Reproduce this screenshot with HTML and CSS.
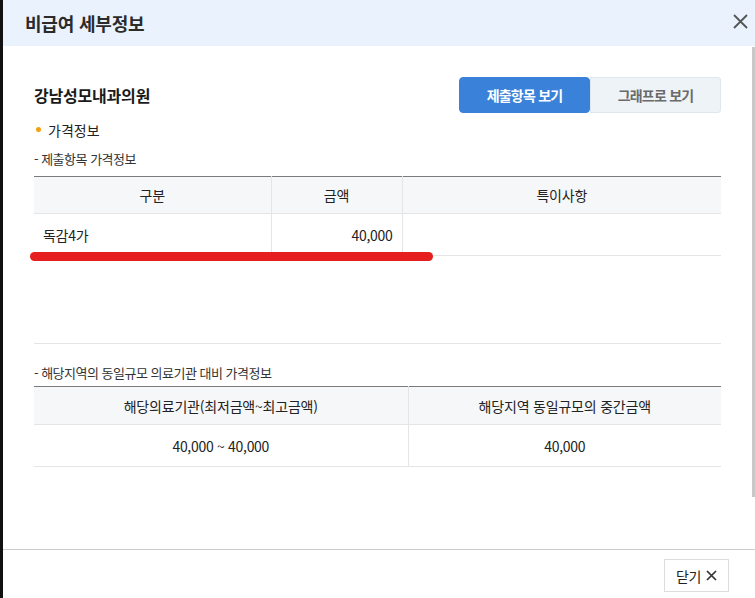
FILE: index.html
```html
<!DOCTYPE html>
<html lang="ko">
<head>
<meta charset="utf-8">
<title>비급여 세부정보</title>
<link rel="stylesheet" href="styles.css">
</head>
<body>
<div class="modal">
  <header class="modal-header">
    <h1 class="modal-title">비급여 세부정보</h1>
    <button class="icon-close" type="button" aria-label="닫기">
      <svg width="15" height="15" viewBox="0 0 15 15"><path d="M1 1L14 14M14 1L1 14" stroke="#555" stroke-width="1.8" fill="none"/></svg>
    </button>
  </header>
  <main class="modal-body">
    <div class="top-row">
      <h2 class="hospital">강남성모내과의원</h2>
      <div class="toggle">
        <button class="toggle-btn active" type="button">제출항목 보기</button>
        <button class="toggle-btn" type="button">그래프로 보기</button>
      </div>
    </div>
    <h3 class="bullet-title">가격정보</h3>
    <p class="sub-title">- 제출항목 가격정보</p>
    <div class="table-box">
      <table class="grid grid-3">
        <thead>
          <tr><th>구분</th><th>금액</th><th>특이사항</th></tr>
        </thead>
        <tbody>
          <tr><td class="left">독감4가</td><td class="right">40,000</td><td></td></tr>
        </tbody>
      </table>
      <span class="marker"></span>
    </div>
    <p class="sub-title second">- 해당지역의 동일규모 의료기관 대비 가격정보</p>
    <table class="grid grid-2">
      <thead>
        <tr><th>해당의료기관(최저금액~최고금액)</th><th>해당지역 동일규모의 중간금액</th></tr>
      </thead>
      <tbody>
        <tr><td>40,000 ~ 40,000</td><td>40,000</td></tr>
      </tbody>
    </table>
    <span class="scroll-thumb"></span>
  </main>
  <footer class="modal-footer">
    <button class="btn-close" type="button">닫기
      <svg width="11" height="11" viewBox="0 0 11 11"><path d="M1 1L10 10M10 1L1 10" stroke="#333" stroke-width="1.7" fill="none"/></svg>
    </button>
  </footer>
</div>
</body>
</html>
```

FILE: styles.css
```css
* { box-sizing: border-box; }
html, body { margin: 0; padding: 0; }
body {
  width: 755px;
  height: 598px;
  overflow: hidden;
  background: #fff;
  font-family: "Noto Sans CJK KR", "Noto Sans", sans-serif;
  color: #222;
}
button { font-family: inherit; cursor: pointer; }

.modal {
  height: 598px;
  border-left: 3px solid #111;
  display: flex;
  flex-direction: column;
}

.modal-header {
  height: 46px;
  flex: none;
  background: #eaf2fd;
  display: flex;
  align-items: center;
  justify-content: space-between;
  padding: 0 7px 0 22px;
}
.modal-title {
  margin: 0;
  font-size: 18px;
  font-weight: 700;
  letter-spacing: -0.2px;
  color: #2b2b2b;
}
.icon-close {
  border: 0;
  background: none;
  padding: 0;
  width: 15px;
  height: 15px;
  display: flex;
  margin-top: -3px;
}

.modal-body {
  position: relative;
  flex: 1;
  padding: 31px 34px 0 31px;
}
.scroll-thumb {
  position: absolute;
  right: 0;
  top: 1px;
  width: 3px;
  height: 450px;
  background: #c8c8c8;
}

.top-row {
  display: flex;
  align-items: center;
  justify-content: space-between;
  height: 36px;
}
.hospital {
  margin: 0;
  font-size: 16px;
  font-weight: 700;
  letter-spacing: -0.2px;
  color: #1a1a1a;
}
.toggle { display: flex; }
.toggle-btn {
  width: 131px;
  height: 36px;
  border: 1px solid #dfe6ee;
  background: #eef3f8;
  color: #6a6a6a;
  font-size: 14px;
  font-weight: 700;
  letter-spacing: -0.8px;
  padding: 0;
  border-radius: 0 3px 3px 0;
}
.toggle-btn.active {
  background: #3a82d9;
  border-color: #3a82d9;
  color: #fff;
  border-radius: 4px;
}

.bullet-title {
  margin: 8px 0 0;
  height: 18px;
  line-height: 18px;
  font-size: 14px;
  font-weight: 400;
  letter-spacing: 0;
  color: #222;
  display: flex;
  align-items: center;
}
.bullet-title::before {
  content: "";
  width: 5px;
  height: 5px;
  border-radius: 50%;
  background: #f5a10e;
  margin: 0 7px 2px 2px;
}

.sub-title {
  margin: 10px 0 0;
  height: 20px;
  line-height: 20px;
  font-size: 13px;
  letter-spacing: -0.5px;
  color: #333;
}
.sub-title.second { margin-top: 19px; }

.table-box {
  position: relative;
  margin-top: 7px;
  height: 168px;
  border-bottom: 1px solid #e5e5e5;
}
.marker {
  position: absolute;
  left: -4px;
  top: 76px;
  width: 403px;
  height: 9px;
  border-radius: 5px;
  background: #e61e1f;
}

.grid {
  width: 100%;
  border-collapse: collapse;
  border-top: 1px solid #7b7b7b;
  table-layout: fixed;
}
.grid th {
  height: 37px;
  background: #f6f7f9;
  font-size: 14px;
  font-weight: 400;
  letter-spacing: -0.2px;
  color: #222;
  border-bottom: 1px solid #e5e5e5;
  border-left: 1px solid #e5e5e5;
  padding: 0;
}
.grid td {
  height: 42px;
  font-size: 14px;
  letter-spacing: -0.3px;
  color: #222;
  text-align: center;
  border-bottom: 1px solid #e5e5e5;
  border-left: 1px solid #e5e5e5;
  padding: 0 9px;
}
.grid th:first-child, .grid td:first-child { border-left: 0; }
.grid td.left { text-align: left; }
.grid td.right { text-align: right; }
.grid-3 th:nth-child(1) { width: 237px; }
.grid-3 th:nth-child(2) { width: 131px; }
.grid-2 th:nth-child(1) { width: 374px; }

.grid-2 { margin-top: 3px; }
.grid-2 th { height: 38px; }

.modal-footer {
  flex: none;
  height: 49px;
  border-top: 1px solid #cccccc;
  display: flex;
  justify-content: flex-end;
  align-items: flex-start;
  padding: 9px 26px 0 0;
}
.btn-close {
  width: 65px;
  height: 33px;
  border: 1px solid #dddddd;
  background: #fff;
  font-size: 14px;
  letter-spacing: -0.3px;
  color: #222;
  display: flex;
  align-items: center;
  justify-content: center;
  gap: 5px;
  padding: 0;
}
```
